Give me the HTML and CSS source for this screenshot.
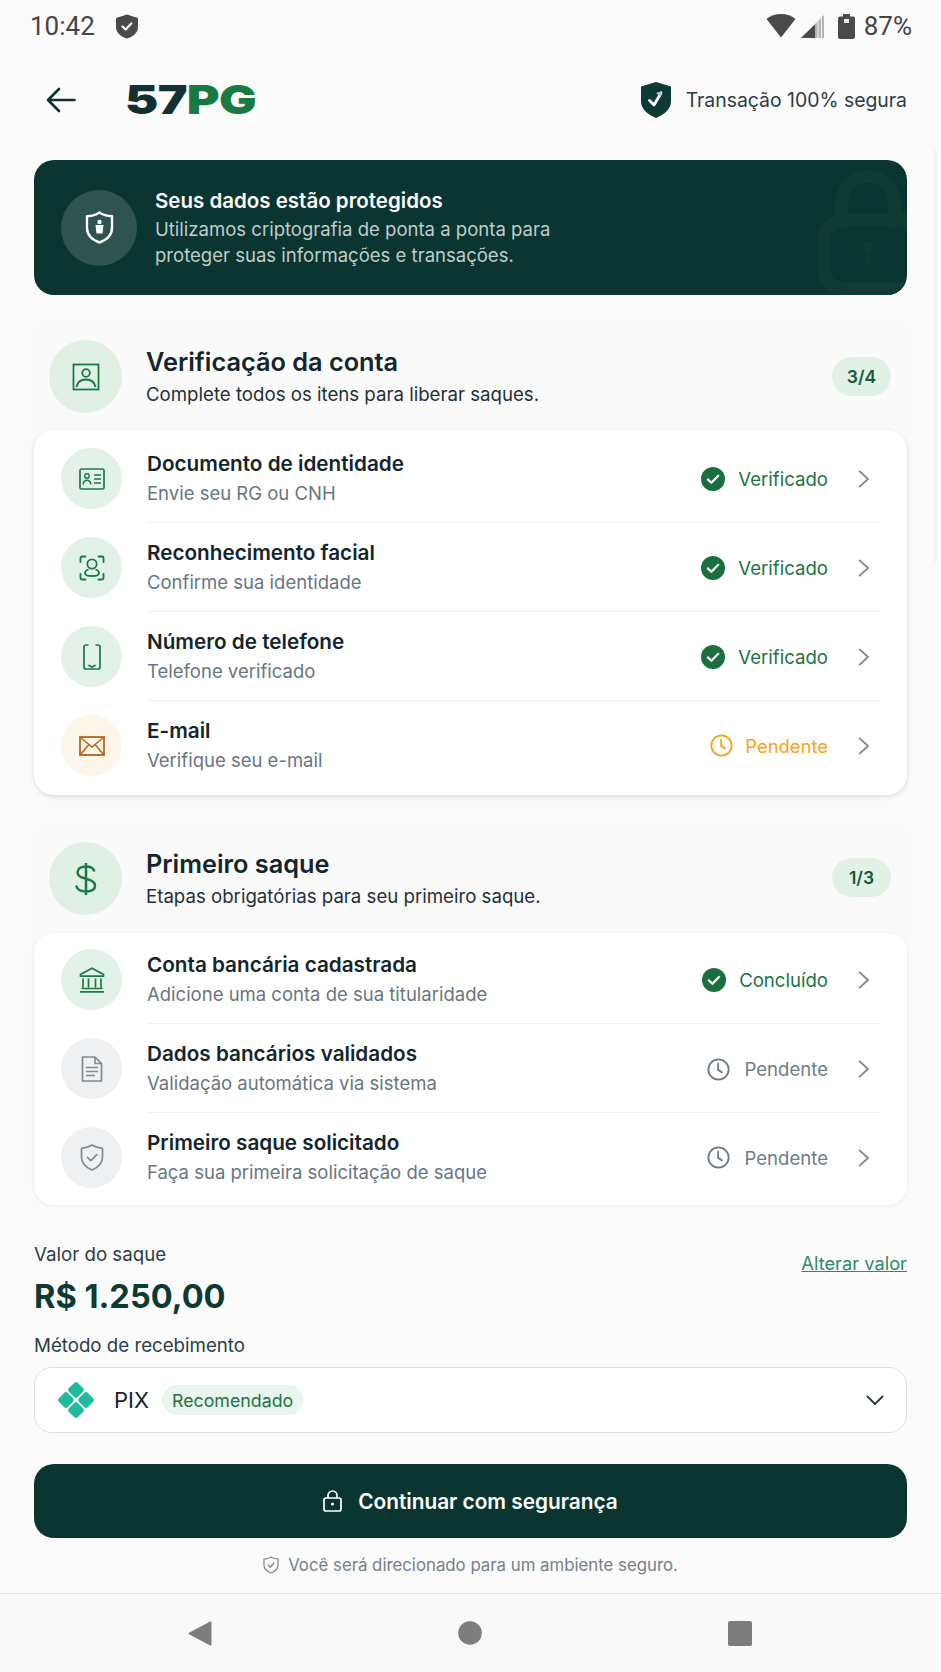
FILE: index.html
```html
<!DOCTYPE html>
<html lang="pt-BR">
<head>
    <meta charset="UTF-8">
    <title>57PG - Verificação</title>
    <link rel="stylesheet" href="styles.css">
</head>
<body>
    <svg class="defs" width="0" height="0">
        <symbol id="ok" viewBox="0 0 24 24">
            <circle cx="12" cy="12" r="12" fill="#1b6f3e"/>
            <path d="M6.8 12.400l3.600 3.400 6.800-7" fill="none" stroke="#fff" stroke-width="2.200" stroke-linecap="round" stroke-linejoin="round"/>
        </symbol>
        <symbol id="clock" viewBox="0 0 24 24">
            <circle cx="12" cy="12" r="10.600" fill="none" stroke="currentColor" stroke-width="1.900"/>
            <path d="M11.600 6v6.400l4 2.600" fill="none" stroke="currentColor" stroke-width="1.900" stroke-linecap="round" stroke-linejoin="round"/>
        </symbol>
        <symbol id="chev" viewBox="0 0 12 18">
            <path d="M1.600 1.400L10 9l-8.400 7.600" fill="none" stroke="#7f8a94" stroke-width="1.900" stroke-linecap="round" stroke-linejoin="round"/>
        </symbol>
    </svg>

    <div class="scrollbar"></div>

    <div class="statusbar">
        <div class="status-left">
            <span class="clock-time">10:42</span>
            <svg width="24" height="25" viewBox="0 0 24 25"><path d="M12 0.500l11 3.600v9c0 5.600-4.600 9.600-11 11.400C5.600 22.700 1 18.700 1 13.100v-9z" fill="#4a4a4a"/><path d="M7.500 12.500l3.200 3 5.600-6" fill="none" stroke="#fff" stroke-width="2.200" stroke-linecap="round" stroke-linejoin="round"/></svg>
        </div>
        <div class="status-right">
            <svg width="30" height="24" viewBox="0 0 30 24"><path d="M0.500 5C4.500 1.800 9.500 0 15 0s10.500 1.800 14.500 5L15 23.500z" fill="#4a4a4a"/></svg>
            <svg width="24" height="23" viewBox="0 0 24 23"><path d="M23 0v23H0z" fill="#b5b5b5"/><path d="M14 9.500V23H0z" fill="#4a4a4a"/><path d="M17 5v18M20.500 2v21" stroke="#f4f4f4" stroke-width="1"/></svg>
            <svg class="battery" width="17" height="25" viewBox="0 0 17 25"><path d="M5 0h7v2.500h3a2 2 0 0 1 2 2V23a2 2 0 0 1-2 2H2a2 2 0 0 1-2-2V4.500a2 2 0 0 1 2-2h3z" fill="#4a4a4a"/><rect x="6" y="5" width="5" height="4" fill="#e8e8e8"/></svg>
            <span class="percent">87%</span>
        </div>
    </div>

    <header class="topbar">
        <div class="brand">
            <svg width="30" height="26" viewBox="0 0 30 26"><path d="M28.500 13H2M13 2L2 13l11 11" fill="none" stroke="#12302f" stroke-width="2.600" stroke-linecap="round" stroke-linejoin="round"/></svg>
            <div class="logo"><span class="logo-dark">57</span><span class="logo-green">PG</span></div>
        </div>
        <div class="secure">
            <svg width="30" height="36" viewBox="0 0 30 36"><path d="M15 0l15 4.500V19c0 8-6.500 13.500-15 17C6.500 32.500 0 27 0 19V4.500z" fill="#0e3a35"/><path d="M8.500 18.500l4.500 4.500 7-12" fill="none" stroke="#fff" stroke-width="2.800" stroke-linecap="round" stroke-linejoin="round"/><path d="M15 11l6-2-1 6z" fill="#b9c9c5"/></svg>
            <span>Transação 100% segura</span>
        </div>
    </header>

    <main class="content">
        <section class="banner">
            <svg class="banner-lock" width="96" height="130" viewBox="0 0 96 130">
                <path d="M30.500 60V35a26.500 26.500 0 0 1 53 0v25" fill="none" stroke="#103b33" stroke-width="13"/>
                <rect x="12.500" y="51.500" width="100" height="70" rx="22" fill="none" stroke="#103b33" stroke-width="13"/>
                <circle cx="57" cy="80" r="6" fill="#103b33"/>
                <path d="M54.500 82h5l1 14h-7z" fill="#103b33"/>
            </svg>
            <div class="banner-icon">
                <svg width="29" height="33" viewBox="0 0 29 33"><path d="M14.500 1.500C18 4 22 5 27 5.300V17c0 7-5 11.800-12.500 14.500C7 28.800 2 24 2 17V5.300C7 5 11 4 14.500 1.500z" fill="none" stroke="#fff" stroke-width="2.400" stroke-linejoin="round"/><path d="M10.500 14h8l-1 8.500h-6z" fill="#fff"/><circle cx="14.500" cy="11" r="2.200" fill="#fff"/></svg>
            </div>
            <div class="banner-text">
                <h2>Seus dados estão protegidos</h2>
                <p>Utilizamos criptografia de ponta a ponta para<br>proteger suas informações e transações.</p>
            </div>
        </section>

        <section class="group first">
            <div class="group-head">
                <div class="head-icon">
                    <svg width="28" height="28" viewBox="0 0 28 28"><rect x="1.500" y="1.500" width="25" height="25" fill="none" stroke="#1b7a42" stroke-width="1.800"/><circle cx="14" cy="10" r="3.800" fill="none" stroke="#1b7a42" stroke-width="1.800"/><path d="M4.500 24c1-5 4.500-7.500 9.500-7.500s8.500 2.500 9.500 7.500" fill="none" stroke="#1b7a42" stroke-width="1.800"/></svg>
                </div>
                <div class="head-text">
                    <h2>Verificação da conta</h2>
                    <p>Complete todos os itens para liberar saques.</p>
                </div>
                <span class="counter">3/4</span>
            </div>
            <div class="list list-a">
                <div class="row">
                    <div class="row-icon">
                        <svg width="26" height="22" viewBox="0 0 26 22"><rect x="1" y="1" width="24" height="20" rx="1.500" fill="none" stroke="#1b7a42" stroke-width="1.700"/><circle cx="8" cy="8" r="2.200" fill="none" stroke="#1b7a42" stroke-width="1.500"/><path d="M4 16.500c.5-3 2-4.300 4-4.300s3.500 1.300 4 4.300M15 7h7M15 11h7M15 15h7" fill="none" stroke="#1b7a42" stroke-width="1.600"/></svg>
                    </div>
                    <div class="row-body">
                        <div class="row-text"><h3>Documento de identidade</h3><p>Envie seu RG ou CNH</p></div>
                        <div class="state done"><svg class="ico-ok"><use href="#ok"/></svg><span>Verificado</span></div>
                        <svg class="ico-chev"><use href="#chev"/></svg>
                    </div>
                </div>
                <div class="row">
                    <div class="row-icon">
                        <svg width="26" height="26" viewBox="0 0 26 26"><path d="M1.500 7V3a1.500 1.500 0 0 1 1.500-1.500h3.500M19.500 1.500H23A1.500 1.500 0 0 1 24.500 3v4M1.500 19v4A1.500 1.500 0 0 0 3 24.500h3.500M19.500 24.500H23a1.500 1.500 0 0 0 1.500-1.500v-4" fill="none" stroke="#1b7a42" stroke-width="1.800" stroke-linecap="round"/><circle cx="13" cy="9" r="4.700" fill="none" stroke="#1b7a42" stroke-width="1.800"/><path d="M9.500 14.500c-2.500.7-3.500 2.200-3.500 3.700 0 1.800 3 2.800 7 2.800s7-1 7-2.800c0-1.500-1-3-3.500-3.700" fill="none" stroke="#1b7a42" stroke-width="1.800"/></svg>
                    </div>
                    <div class="row-body">
                        <div class="row-text"><h3>Reconhecimento facial</h3><p>Confirme sua identidade</p></div>
                        <div class="state done"><svg class="ico-ok"><use href="#ok"/></svg><span>Verificado</span></div>
                        <svg class="ico-chev"><use href="#chev"/></svg>
                    </div>
                </div>
                <div class="row">
                    <div class="row-icon">
                        <svg width="18" height="26" viewBox="0 0 18 26"><path d="M5.500 1H3a2 2 0 0 0-2 2v20a2 2 0 0 0 2 2h12a2 2 0 0 0 2-2V3a2 2 0 0 0-2-2h-2.500" fill="none" stroke="#1b7a42" stroke-width="1.700"/><path d="M6 21.500l3 1.500 3-1.500" fill="none" stroke="#1b7a42" stroke-width="1.800" stroke-linecap="round"/></svg>
                    </div>
                    <div class="row-body">
                        <div class="row-text"><h3>Número de telefone</h3><p>Telefone verificado</p></div>
                        <div class="state done"><svg class="ico-ok"><use href="#ok"/></svg><span>Verificado</span></div>
                        <svg class="ico-chev"><use href="#chev"/></svg>
                    </div>
                </div>
                <div class="row">
                    <div class="row-icon warm">
                        <svg width="26" height="20" viewBox="0 0 26 20"><rect x="1" y="1" width="24" height="18" fill="none" stroke="#b5651d" stroke-width="1.800"/><path d="M1.500 1.500L13 11 24.500 1.500M1.500 18.500L9.500 9M24.500 18.500L16.500 9" fill="none" stroke="#b5651d" stroke-width="1.500"/></svg>
                    </div>
                    <div class="row-body">
                        <div class="row-text"><h3>E-mail</h3><p>Verifique seu e-mail</p></div>
                        <div class="state waiting"><svg class="ico-clock"><use href="#clock"/></svg><span>Pendente</span></div>
                        <svg class="ico-chev"><use href="#chev"/></svg>
                    </div>
                </div>
            </div>
        </section>

        <section class="group second">
            <div class="group-head">
                <div class="head-icon">
                    <svg width="22" height="32" viewBox="0 0 22 32"><path d="M19 7.500C18 4.800 15 3.500 11 3.500c-5 0-8.500 2.200-8.500 6 0 3.600 3.200 5 8.500 6.300 5.500 1.300 9 2.900 9 6.700 0 3.900-3.700 6-9 6-5 0-8.500-1.800-9.500-5M11 .5v31" fill="none" stroke="#1b7a42" stroke-width="2.500" stroke-linecap="round"/></svg>
                </div>
                <div class="head-text">
                    <h2>Primeiro saque</h2>
                    <p>Etapas obrigatórias para seu primeiro saque.</p>
                </div>
                <span class="counter">1/3</span>
            </div>
            <div class="list list-b">
                <div class="row">
                    <div class="row-icon">
                        <svg width="26" height="26" viewBox="0 0 26 26"><path d="M13 1.200L1.500 7.500v1.700h23V7.500zM4 11.500v9M9.500 11.500v9M16.500 11.500v9M22 11.500v9M2.500 21.500h21M1 24.800h24" fill="none" stroke="#1b7a42" stroke-width="1.700" stroke-linejoin="round"/></svg>
                    </div>
                    <div class="row-body">
                        <div class="row-text"><h3>Conta bancária cadastrada</h3><p>Adicione uma conta de sua titularidade</p></div>
                        <div class="state done"><svg class="ico-ok"><use href="#ok"/></svg><span>Concluído</span></div>
                        <svg class="ico-chev"><use href="#chev"/></svg>
                    </div>
                </div>
                <div class="row">
                    <div class="row-icon grey">
                        <svg width="22" height="26" viewBox="0 0 22 26"><path d="M14 1H1.500v24h19V7.500zM14 1v6.500h6.500M5 11.500h12M5 15.500h12M5 19.500h9" fill="none" stroke="#7f8a94" stroke-width="1.700" stroke-linejoin="round"/></svg>
                    </div>
                    <div class="row-body">
                        <div class="row-text"><h3>Dados bancários validados</h3><p>Validação automática via sistema</p></div>
                        <div class="state idle"><svg class="ico-clock"><use href="#clock"/></svg><span>Pendente</span></div>
                        <svg class="ico-chev"><use href="#chev"/></svg>
                    </div>
                </div>
                <div class="row">
                    <div class="row-icon grey">
                        <svg width="24" height="27" viewBox="0 0 24 27"><path d="M12 1c3 2 6.500 3 10.500 3.400V13c0 6-4 10.300-10.500 13C5.500 23.300 1.500 19 1.500 13V4.400C5.500 4 9 3 12 1z" fill="none" stroke="#7f8a94" stroke-width="1.700" stroke-linejoin="round"/><path d="M7.500 13.500l3.300 3.200 6-6" fill="none" stroke="#7f8a94" stroke-width="1.700" stroke-linecap="round" stroke-linejoin="round"/></svg>
                    </div>
                    <div class="row-body">
                        <div class="row-text"><h3>Primeiro saque solicitado</h3><p>Faça sua primeira solicitação de saque</p></div>
                        <div class="state idle"><svg class="ico-clock"><use href="#clock"/></svg><span>Pendente</span></div>
                        <svg class="ico-chev"><use href="#chev"/></svg>
                    </div>
                </div>
            </div>
        </section>

        <section class="amount">
            <div>
                <div class="label">Valor do saque</div>
                <div class="value">R$ 1.250,00</div>
            </div>
            <a class="change" href="#">Alterar valor</a>
        </section>

        <div class="label method-label">Método de recebimento</div>
        <div class="select">
            <svg width="38" height="38" viewBox="1 1 36 36">
                <g fill="#22bb9c">
                    <rect x="13" y="3.500" width="12" height="12" rx="2.500" transform="rotate(45 19 9.500)"/>
                    <rect x="13" y="22.500" width="12" height="12" rx="2.500" transform="rotate(45 19 28.500)"/>
                    <rect x="3.500" y="13" width="12" height="12" rx="2.500" transform="rotate(45 9.500 19)"/>
                    <rect x="22.500" y="13" width="12" height="12" rx="2.500" transform="rotate(45 28.500 19)"/>
                </g>
            </svg>
            <span class="pix">PIX</span>
            <span class="tag">Recomendado</span>
            <svg class="select-arrow" width="18" height="11" viewBox="0 0 18 11"><path d="M1.500 1.500L9 9l7.500-7.500" fill="none" stroke="#2a383e" stroke-width="1.800" stroke-linecap="round" stroke-linejoin="round"/></svg>
        </div>

        <button class="cta">
            <svg width="19" height="22" viewBox="0 0 19 22"><rect x="1" y="8" width="17" height="13" rx="2" fill="none" stroke="#fff" stroke-width="1.700"/><path d="M5 8V5.500a4.500 4.500 0 0 1 9 0V8" fill="none" stroke="#fff" stroke-width="1.700"/><circle cx="9.500" cy="14" r="1.500" fill="#fff"/></svg>
            <span>Continuar com segurança</span>
        </button>

        <div class="note">
            <svg width="16" height="18" viewBox="0 0 16 18"><path d="M8 1c2 1.300 4.200 2 7 2.200V9c0 3.800-2.700 6.500-7 8-4.300-1.500-7-4.200-7-8V3.200C3.800 3 6 2.300 8 1z" fill="none" stroke="#7f8a94" stroke-width="1.300" stroke-linejoin="round"/><path d="M5 9l2.200 2.200L11 7" fill="none" stroke="#7f8a94" stroke-width="1.300" stroke-linecap="round" stroke-linejoin="round"/></svg>
            <span>Você será direcionado para um ambiente seguro.</span>
        </div>
    </main>

    <nav class="navbar">
        <svg width="24" height="25" viewBox="0 0 24 25"><path d="M23.500 1.500v22a1 1 0 0 1-1.700.8L1 13.300a1 1 0 0 1 0-1.600L21.800.7a1 1 0 0 1 1.700.8z" fill="#7d7d7d"/></svg>
        <svg width="24" height="24" viewBox="0 0 24 24"><circle cx="12" cy="12" r="11.800" fill="#7d7d7d"/></svg>
        <svg width="24" height="25" viewBox="0 0 24 25"><rect width="24" height="25" rx="2" fill="#7d7d7d"/></svg>
    </nav>
</body>
</html>
```

FILE: styles.css
```css
* {
    box-sizing: border-box;
}

html, body {
    margin: 0;
    padding: 0;
}

body {
    width: 941px;
    height: 1672px;
    overflow: hidden;
    position: relative;
    display: flex;
    flex-direction: column;
    font-family: Inter, 'Noto Sans', sans-serif;
    background-color: #fbfbfb;
    color: #14252b;
}

h2, h3, p {
    margin: 0;
}

svg {
    display: block;
    flex-shrink: 0;
}

.defs {
    position: absolute;
}

.scrollbar {
    position: absolute;
    top: 150px;
    right: 4px;
    width: 3px;
    height: 412px;
    background-color: #f3f3f3;
}

/* status bar */
.statusbar {
    height: 52px;
    padding: 0 29px 0 30px;
    display: flex;
    justify-content: space-between;
    align-items: center;
    font-family: Roboto, sans-serif;
    font-size: 26px;
    color: #444;
}

.status-left, .status-right {
    display: flex;
    align-items: center;
}

.status-left {
    gap: 20px;
}

.status-right {
    gap: 5px;
}

.battery {
    margin-left: 8px;
}

.percent {
    margin-left: 4px;
}

/* header */
.topbar {
    height: 96px;
    padding: 0 34px 0 46px;
    display: flex;
    justify-content: space-between;
    align-items: center;
}

.brand {
    display: flex;
    align-items: center;
    gap: 49px;
}

.logo {
    font-size: 40px;
    font-weight: 900;
    line-height: 40px;
    letter-spacing: -0.5px;
    transform: scaleX(1.25);
    transform-origin: left center;
}

.logo-dark {
    color: #12302f;
}

.logo-green {
    color: #177a42;
}

.secure {
    display: flex;
    align-items: center;
    gap: 15px;
    font-size: 19.4px;
    color: #2c3d45;
}

.content {
    padding: 12px 34px 0;
}

/* banner */
.banner {
    position: relative;
    height: 135px;
    padding-left: 27px;
    display: flex;
    align-items: center;
    gap: 18px;
    overflow: hidden;
    border-radius: 20px;
    background-color: #0a3530;
    color: #fff;
}

.banner-lock {
    position: absolute;
    right: 0;
    top: 8px;
}

.banner-icon {
    width: 76px;
    height: 76px;
    border-radius: 50%;
    display: flex;
    align-items: center;
    justify-content: center;
    background-color: #2f534e;
}

.banner-text h2 {
    font-size: 20.5px;
    line-height: 28px;
    font-weight: 600;
}

.banner-text p {
    margin-top: 2px;
    font-size: 18.550px;
    line-height: 25.500px;
    color: #bfcdca;
}

/* sections */
.group {
    border-radius: 20px;
    background-color: #fafafa;
    box-shadow: 0 0 6px rgba(0, 0, 0, 0.02);
}

.group.first {
    margin-top: 30px;
}

.group.second {
    margin-top: 33px;
}

.group-head {
    height: 105px;
    padding: 15px 16px 0 15px;
    display: flex;
    align-items: flex-start;
    gap: 24px;
}

.second .group-head {
    padding-top: 14px;
}

.head-icon {
    width: 73px;
    height: 73px;
    border-radius: 50%;
    display: flex;
    align-items: center;
    justify-content: center;
    background-color: #e0f0e4;
}

.head-text {
    flex: 1;
    padding-top: 5px;
}

.head-text h2 {
    font-size: 25.300px;
    line-height: 34px;
    font-weight: 600;
    color: #14252b;
}

.head-text p {
    margin-top: 1px;
    font-size: 18.650px;
    line-height: 28px;
    color: #1f3038;
}

.counter {
    margin-top: 17px;
    width: 59px;
    height: 39px;
    border-radius: 20px;
    display: flex;
    align-items: center;
    justify-content: center;
    font-size: 17.500px;
    font-weight: 600;
    color: #175c38;
    background-color: #e2f1e6;
}

.second .counter {
    margin-top: 16px;
}

.list {
    border-radius: 20px;
    background-color: #fff;
}

.list-a {
    padding: 4px 0 5px;
    box-shadow: 0 2px 5px rgba(20, 40, 40, 0.13);
}

.list-b {
    padding: 2px 0 3px;
    box-shadow: 0 1px 4px rgba(20, 40, 40, 0.06);
}

.row {
    height: 89px;
    padding: 0 27px;
    display: flex;
    align-items: center;
    gap: 25px;
}

.row-icon {
    width: 61px;
    height: 61px;
    border-radius: 50%;
    display: flex;
    align-items: center;
    justify-content: center;
    flex-shrink: 0;
    background-color: #e3f2e8;
}

.row-icon.warm {
    background-color: #fdf6ea;
}

.row-icon.grey {
    background-color: #eef0f2;
}

.row-body {
    flex: 1;
    align-self: stretch;
    padding: 2px 10px 0 0;
    display: flex;
    align-items: center;
    border-bottom: 1.5px solid #eff1f2;
}

.row:last-child .row-body {
    padding-top: 0;
    border-bottom: none;
}

.row-text {
    flex: 1;
    margin-bottom: 2px;
}

.row-text h3 {
    font-size: 20.700px;
    line-height: 27px;
    font-weight: 590;
    color: #14252b;
}

.row-text p {
    margin-top: 4px;
    font-size: 18.500px;
    line-height: 25px;
    color: #69767f;
}

.state {
    display: flex;
    align-items: center;
    gap: 13px;
    font-size: 18.600px;
}

.state.done {
    color: #1b7343;
}

.state.waiting {
    gap: 12px;
    font-size: 18.400px;
    color: #f7a416;
}

.state.idle {
    gap: 14px;
    color: #6f7c85;
}

.ico-ok {
    width: 24px;
    height: 24px;
}

.ico-clock {
    width: 23px;
    height: 23px;
}

.ico-chev {
    width: 12px;
    height: 18px;
    margin-left: 30px;
}

/* amount */
.amount {
    margin-top: 37px;
    display: flex;
    justify-content: space-between;
    align-items: flex-start;
}

.label {
    font-size: 18.700px;
    line-height: 26px;
    color: #2c3d45;
}

.value {
    margin-top: 6px;
    font-size: 32.600px;
    line-height: 44px;
    font-weight: 700;
    color: #0d3a34;
}

.change {
    margin-top: 8px;
    font-size: 18.300px;
    line-height: 26px;
    color: #2e8a68;
}

.method-label {
    margin-top: 15px;
}

.select {
    margin-top: 8px;
    height: 66px;
    padding: 0 22px;
    display: flex;
    align-items: center;
    border: 1.5px solid #dcdfe3;
    border-radius: 18px;
    background-color: #fff;
}

.pix {
    margin-left: 19px;
    font-size: 22px;
    color: #14252b;
}

.tag {
    margin-left: 13px;
    height: 30px;
    padding: 0 10px;
    display: flex;
    align-items: center;
    border-radius: 15px;
    font-size: 17.800px;
    color: #1b7343;
    background-color: #ebf5ef;
}

.select-arrow {
    margin-left: auto;
}

.cta {
    margin-top: 31px;
    width: 100%;
    height: 74px;
    display: flex;
    align-items: center;
    justify-content: center;
    gap: 16px;
    border: none;
    border-radius: 20px;
    font-family: Inter, sans-serif;
    font-size: 20.800px;
    font-weight: 600;
    color: #fff;
    background-color: #0a3530;
}

.note {
    margin-top: 15px;
    height: 24px;
    display: flex;
    align-items: center;
    justify-content: center;
    gap: 9px;
    font-size: 16.800px;
    color: #757f88;
}

/* android nav */
.navbar {
    margin-top: auto;
    height: 79px;
    padding-left: 188px;
    padding-right: 189px;
    display: flex;
    justify-content: space-between;
    align-items: center;
    border-top: 1.5px solid #e6e7e8;
    background-color: #f9f9fa;
}
```
